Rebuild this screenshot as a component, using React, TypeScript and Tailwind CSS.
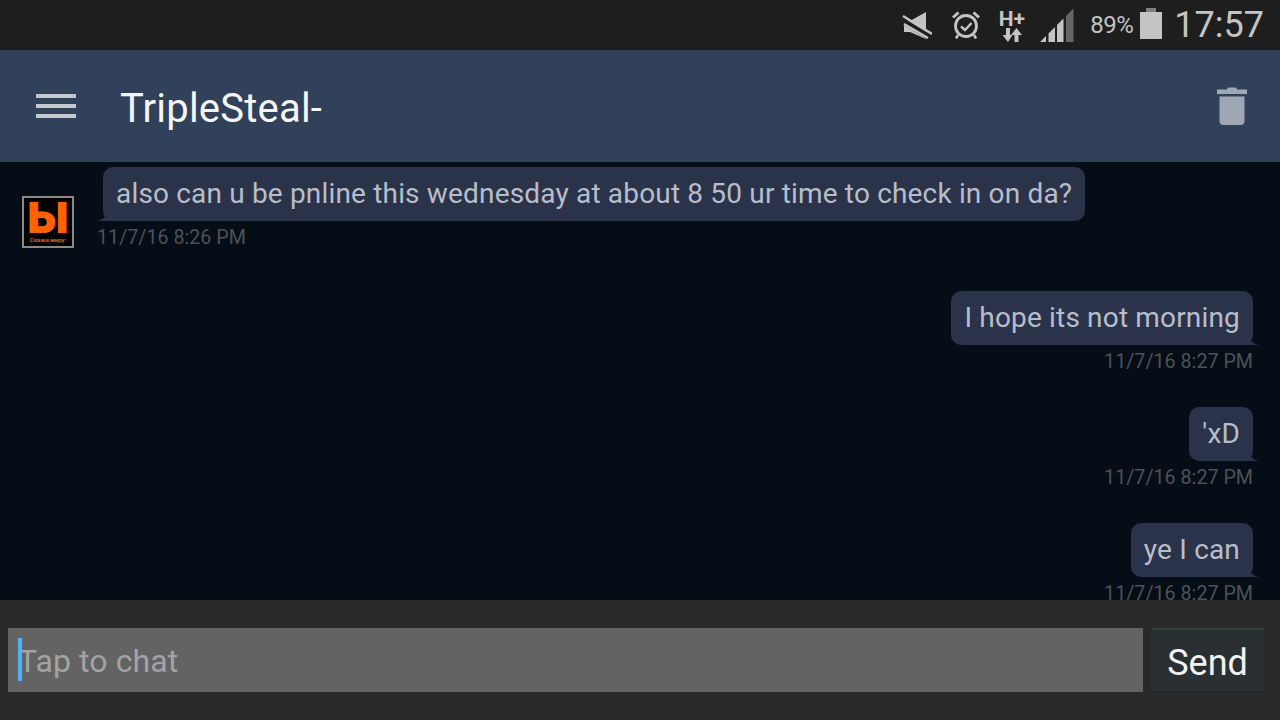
import React from "react";

const font = { fontFamily: "Roboto, sans-serif" };

function Mute() {
  return (
    <svg width="30" height="27" viewBox="0 0 30 27" className="block">
      <path d="M2 9 H8 L24 0 V27 L8 20 H2z" fill="#c4c4c4" />
      <path d="M0 8.500 L30 26.500" stroke="#1e1e1e" strokeWidth="6" />
      <path d="M1 4 L30 22" stroke="#c4c4c4" strokeWidth="2.400" />
      <path d="M2 12 L26 26" stroke="#c4c4c4" strokeWidth="2.400" />
    </svg>
  );
}

function Alarm() {
  return (
    <svg width="30" height="28" viewBox="0 0 30 28" className="block" fill="none" stroke="#c4c4c4">
      <circle cx="15" cy="15" r="10.500" strokeWidth="2.800" />
      <path d="M10 15.500l4 3.500 6.500-7" strokeWidth="2.400" />
      <path d="M2 6.500 L7.500 1.500 M28 6.500 L22.500 1.500" strokeWidth="3" />
      <path d="M7 24 L5 27.500 M23 24 L25 27.500" strokeWidth="2.600" />
    </svg>
  );
}

function Signal() {
  return (
    <svg width="34" height="34" viewBox="0 0 34 34" className="block">
      <path d="M0 34 L6 28 V34z" fill="#c4c4c4" />
      <path d="M8.500 34 V25.500 L15 19 V34z" fill="#c4c4c4" />
      <path d="M17 34 V17 L23.500 10.500 V34z" fill="#c4c4c4" />
      <path d="M26 34 V8 L33.500 0.500 V34z" fill="#666666" />
    </svg>
  );
}

function DataArrows() {
  return (
    <svg width="20" height="14" viewBox="0 0 20 14" className="block">
      <path d="M4 0h4v7h2.500L6 14 .5 7H4z" fill="#c4c4c4" />
      <path d="M14.500 0l5.500 7h-3.500v7h-4V7H9z" fill="#c4c4c4" />
    </svg>
  );
}

function Trash() {
  return (
    <svg width="30" height="38" viewBox="0 0 30 38" className="block">
      <path d="M10 2.500 Q10 .5 12 .5 H18 Q20 .5 20 2.500 H30 V7 H0 V2.500z" fill="#a1a8b5" />
      <path d="M2.500 9.500 H27.500 V34 Q27.500 38 23.500 38 H6.500 Q2.500 38 2.500 34z" fill="#a1a8b5" />
    </svg>
  );
}

function Tail({ side }: { side: "left" | "right" }) {
  return side === "left" ? (
    <svg width="17" height="10" viewBox="0 0 17 10" className="absolute bottom-0 left-[-7px] block">
      <path d="M0 10 Q7 9.500 10 4 V0 H17 V10z" fill="#2b334b" />
    </svg>
  ) : (
    <svg width="17" height="10" viewBox="0 0 17 10" className="absolute right-[-7px] bottom-0 block">
      <path d="M17 10 Q10 9.500 7 4 V0 H0 V10z" fill="#2b334b" />
    </svg>
  );
}

function Bubble({ text, side }: { text: string; side: "left" | "right" }) {
  return (
    <div className="relative flex h-[54px] items-center rounded-[10px] bg-[#2b334b] px-[13px] text-[28px] whitespace-nowrap text-[#b8bec9]">
      <span className="relative z-10 tracking-[0.17px]">{text}</span>
      <Tail side={side} />
    </div>
  );
}

function Stamp({ text }: { text: string }) {
  return <div className="h-[32px] pt-[1px] text-[19.700px] leading-[32px] whitespace-nowrap text-[#4e5257]">{text}</div>;
}

function Mine({ text, time }: { text: string; time: string }) {
  return (
    <div className="flex flex-col items-end pr-[27px]">
      <Bubble text={text} side="right" />
      <Stamp text={time} />
    </div>
  );
}

export default function App() {
  return (
    <div className="flex h-[720px] w-[1280px] flex-col overflow-hidden bg-[#050d17]" style={font}>
      <div className="flex h-[50px] shrink-0 items-center justify-end bg-[#1e1e1e] pr-[16px] text-[#c4c4c4]">
        <div className="mr-[19px]"><Mute /></div>
        <div className="mr-[18px]"><Alarm /></div>
        <div className="mr-[16px] flex w-[25px] flex-col items-center pt-[1px]">
          <span className="h-[18px] text-[21px] leading-[18px] font-bold">H+</span>
          <DataArrows />
        </div>
        <div className="mr-[16px]"><Signal /></div>
        <span className="mr-[7px] text-[24px] tracking-[-0.5px]">89%</span>
        <div className="mr-[12px] flex flex-col items-center pb-[4px]">
          <div className="h-[4px] w-[10px] bg-[#808080]" />
          <div className="h-[27px] w-[22px] bg-[#c4c4c4]" />
        </div>
        <span className="text-[36px] leading-none">17:57</span>
      </div>

      <div className="flex h-[112px] shrink-0 items-center justify-between bg-[#32415a] pr-[33px] pl-[36px]">
        <div className="flex items-center">
          <div className="flex w-[40px] flex-col gap-[6px]">
            <div className="h-[4px] bg-[#c5c9d0]" />
            <div className="h-[4px] bg-[#c5c9d0]" />
            <div className="h-[4px] bg-[#c5c9d0]" />
          </div>
          <span className="mt-[6px] ml-[44px] text-[40px] leading-[48px] tracking-[0.2px] text-[#f4f5f7]">TripleSteal-</span>
        </div>
        <Trash />
      </div>

      <div className="flex min-h-0 flex-1 flex-col overflow-hidden">
        <div className="mb-[38px] flex pt-[5px] pl-[22px]">
          <div className="mt-[29px] flex h-[52px] w-[52px] shrink-0 flex-col items-center overflow-hidden border-2 border-[#8a8a8a] bg-black">
            <span className="h-[38px] text-[43px] leading-[38px] font-black text-[#ff6200]" style={{ fontFamily: "Inter, sans-serif" }}>Ы</span>
            <span className="text-[6px] leading-[8px] font-bold whitespace-nowrap text-[#dd6020]">Скажи миру:</span>
          </div>
          <div className="ml-[23px] flex flex-col items-start">
            <div className="ml-[6px]">
              <Bubble text="also can u be pnline this wednesday at about 8 50 ur time to check in on da?" side="left" />
            </div>
            <Stamp text="11/7/16 8:26 PM" />
          </div>
        </div>
        <div className="flex flex-col gap-[30px]">
          <Mine text="I hope its not morning" time="11/7/16 8:27 PM" />
          <Mine text="'xD" time="11/7/16 8:27 PM" />
          <Mine text="ye I can" time="11/7/16 8:27 PM" />
        </div>
      </div>

      <div className="flex h-[120px] shrink-0 items-start gap-[8px] bg-[#292929] pt-[28px] pr-[16px] pl-[8px]">
        <div className="relative flex h-[64px] flex-1 items-center bg-[#636363] pl-[10px] text-[32px] text-[#a3a3a3]">
          <span className="mt-[2px] tracking-[0.1px]">Tap to chat</span>
          <div className="absolute top-[10px] left-[10px] h-[43px] w-[4px] bg-[#4db2fb]" />
        </div>
        <div className="flex h-[65px] w-[113px] items-center justify-center rounded-[2px] border-t-2 border-b-2 border-t-[#363c40] border-b-[#222527] bg-[#2a2f32] pt-[4px] text-[36px] text-[#f2f2f2]">
          Send
        </div>
      </div>
    </div>
  );
}
